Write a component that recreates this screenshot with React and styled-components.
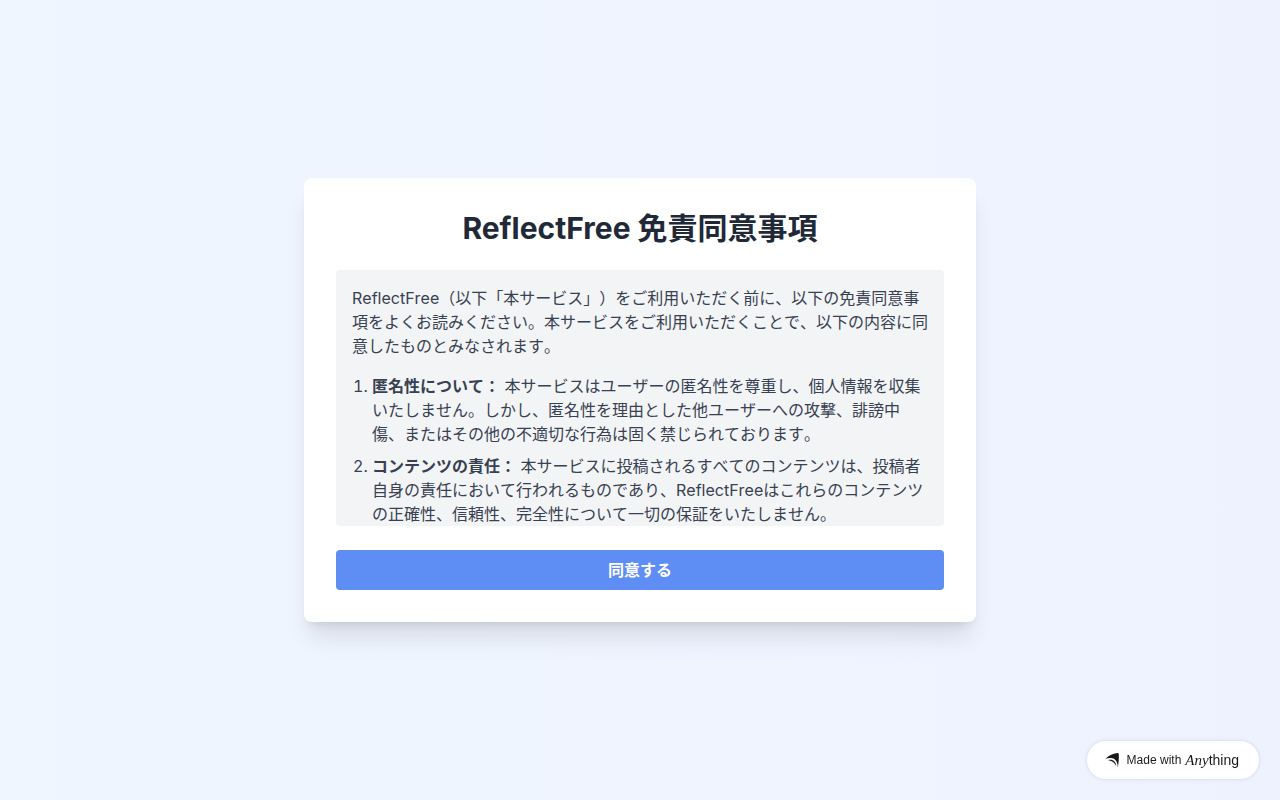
import styled, { createGlobalStyle } from 'styled-components'

const GlobalStyle = createGlobalStyle`
    *, *::before, *::after{
        box-sizing: border-box;
    }
    body{
        margin: 0;
        font-family: Inter, "Noto Sans CJK JP", sans-serif;
        font-size: 16px;
        line-height: 24px;
        text-spacing-trim: space-all;
    }
    h1, p, ol{
        margin: 0;
    }
`

const Page = styled.main`
    min-height: 100vh;
    padding: 16px;
    display: flex;
    align-items: center;
    justify-content: center;
    background: linear-gradient(to right, #eff6ff, #eef2ff);
`

const Card = styled.section`
    width: 100%;
    max-width: 672px;
    padding: 32px;
    display: flex;
    flex-direction: column;
    gap: 24px;
    border-radius: 8px;
    background: #ffffff;
    box-shadow: 0 20px 25px -5px rgba(0, 0, 0, 0.1), 0 8px 10px -6px rgba(0, 0, 0, 0.1);
`

const Title = styled.h1`
    font-size: 30px;
    line-height: 36px;
    font-weight: 700;
    text-align: center;
    color: #1f2937;
`

const Terms = styled.div`
    max-height: 256px;
    padding: 16px;
    display: flex;
    flex-direction: column;
    gap: 16px;
    overflow-y: auto;
    scrollbar-width: none;
    border-radius: 4px;
    background: #f3f4f6;
    color: #374151;
    font-kerning: none;
`

const TermsList = styled.ol`
    padding-left: 20px;
    display: flex;
    flex-direction: column;
    gap: 8px;
`

const AgreeButton = styled.button`
    width: 100%;
    padding: 8px 16px;
    border: none;
    border-radius: 4px;
    background: #5e8df3;
    color: #ffffff;
    font: inherit;
    font-weight: 700;
    cursor: pointer;
`

const Badge = styled.a`
    position: fixed;
    right: 21px;
    bottom: 21px;
    height: 38px;
    padding: 0 20px 0 18px;
    display: flex;
    align-items: center;
    border-radius: 19px;
    background: #ffffff;
    box-shadow: 0 0 4px rgba(0, 0, 0, 0.12);
    color: #18191b;
    font-family: "Liberation Sans", sans-serif;
    font-size: 12px;
    text-decoration: none;
    white-space: nowrap;
    svg{
        margin-right: 8px;
    }
`

const Wordmark = styled.span`
    margin-left: 4px;
    font-size: 14px;
    i{
        font-family: "Liberation Serif", serif;
        font-size: 15px;
    }
`

const terms = [
    {
        title: '匿名性について：',
        text: '本サービスはユーザーの匿名性を尊重し、個人情報を収集いたしません。しかし、匿名性を理由とした他ユーザーへの攻撃、誹謗中傷、またはその他の不適切な行為は固く禁じられております。',
    },
    {
        title: 'コンテンツの責任：',
        text: '本サービスに投稿されるすべてのコンテンツは、投稿者自身の責任において行われるものであり、ReflectFreeはこれらのコンテンツの正確性、信頼性、完全性について一切の保証をいたしません。',
    },
]

function AnythingLogo(){
    return(
        <svg width='14' height='16' viewBox='0 0 14 16' fill='currentColor' aria-hidden='true'>
            <path d='M0 7.5C3.5 3.5 7.5 1.5 12.3 1Q13.7 .9 13.8 2.2C14 7 13.7 11 12.8 15.5C12.8 10.5 11 6.8 7 6.2C4.5 5.9 2 6.4 0 7.5Z'/>
            <path d='M3 8.2C7.5 6.6 11 9.5 11.3 14C9.6 11 7.5 8.6 3 8.2Z'/>
        </svg>
    )
}

export default function App(){
    return(
        <>
            <GlobalStyle/>
            <Page>
                <Card>
                    <Title>ReflectFree 免責同意事項</Title>
                    <Terms tabIndex={0}>
                        <p>ReflectFree（以下「本サービス」）をご利用いただく前に、以下の免責同意事項をよくお読みください。本サービスをご利用いただくことで、以下の内容に同意したものとみなされます。</p>
                        <TermsList>
                            {terms.map(({title, text}) => (
                                <li key={title}><strong>{title}</strong> {text}</li>
                            ))}
                        </TermsList>
                    </Terms>
                    <AgreeButton type='button'>同意する</AgreeButton>
                </Card>
            </Page>
            <Badge href='#'>
                <AnythingLogo/>
                <span>Made with</span>
                <Wordmark><i>Any</i>thing</Wordmark>
            </Badge>
        </>
    )
}
